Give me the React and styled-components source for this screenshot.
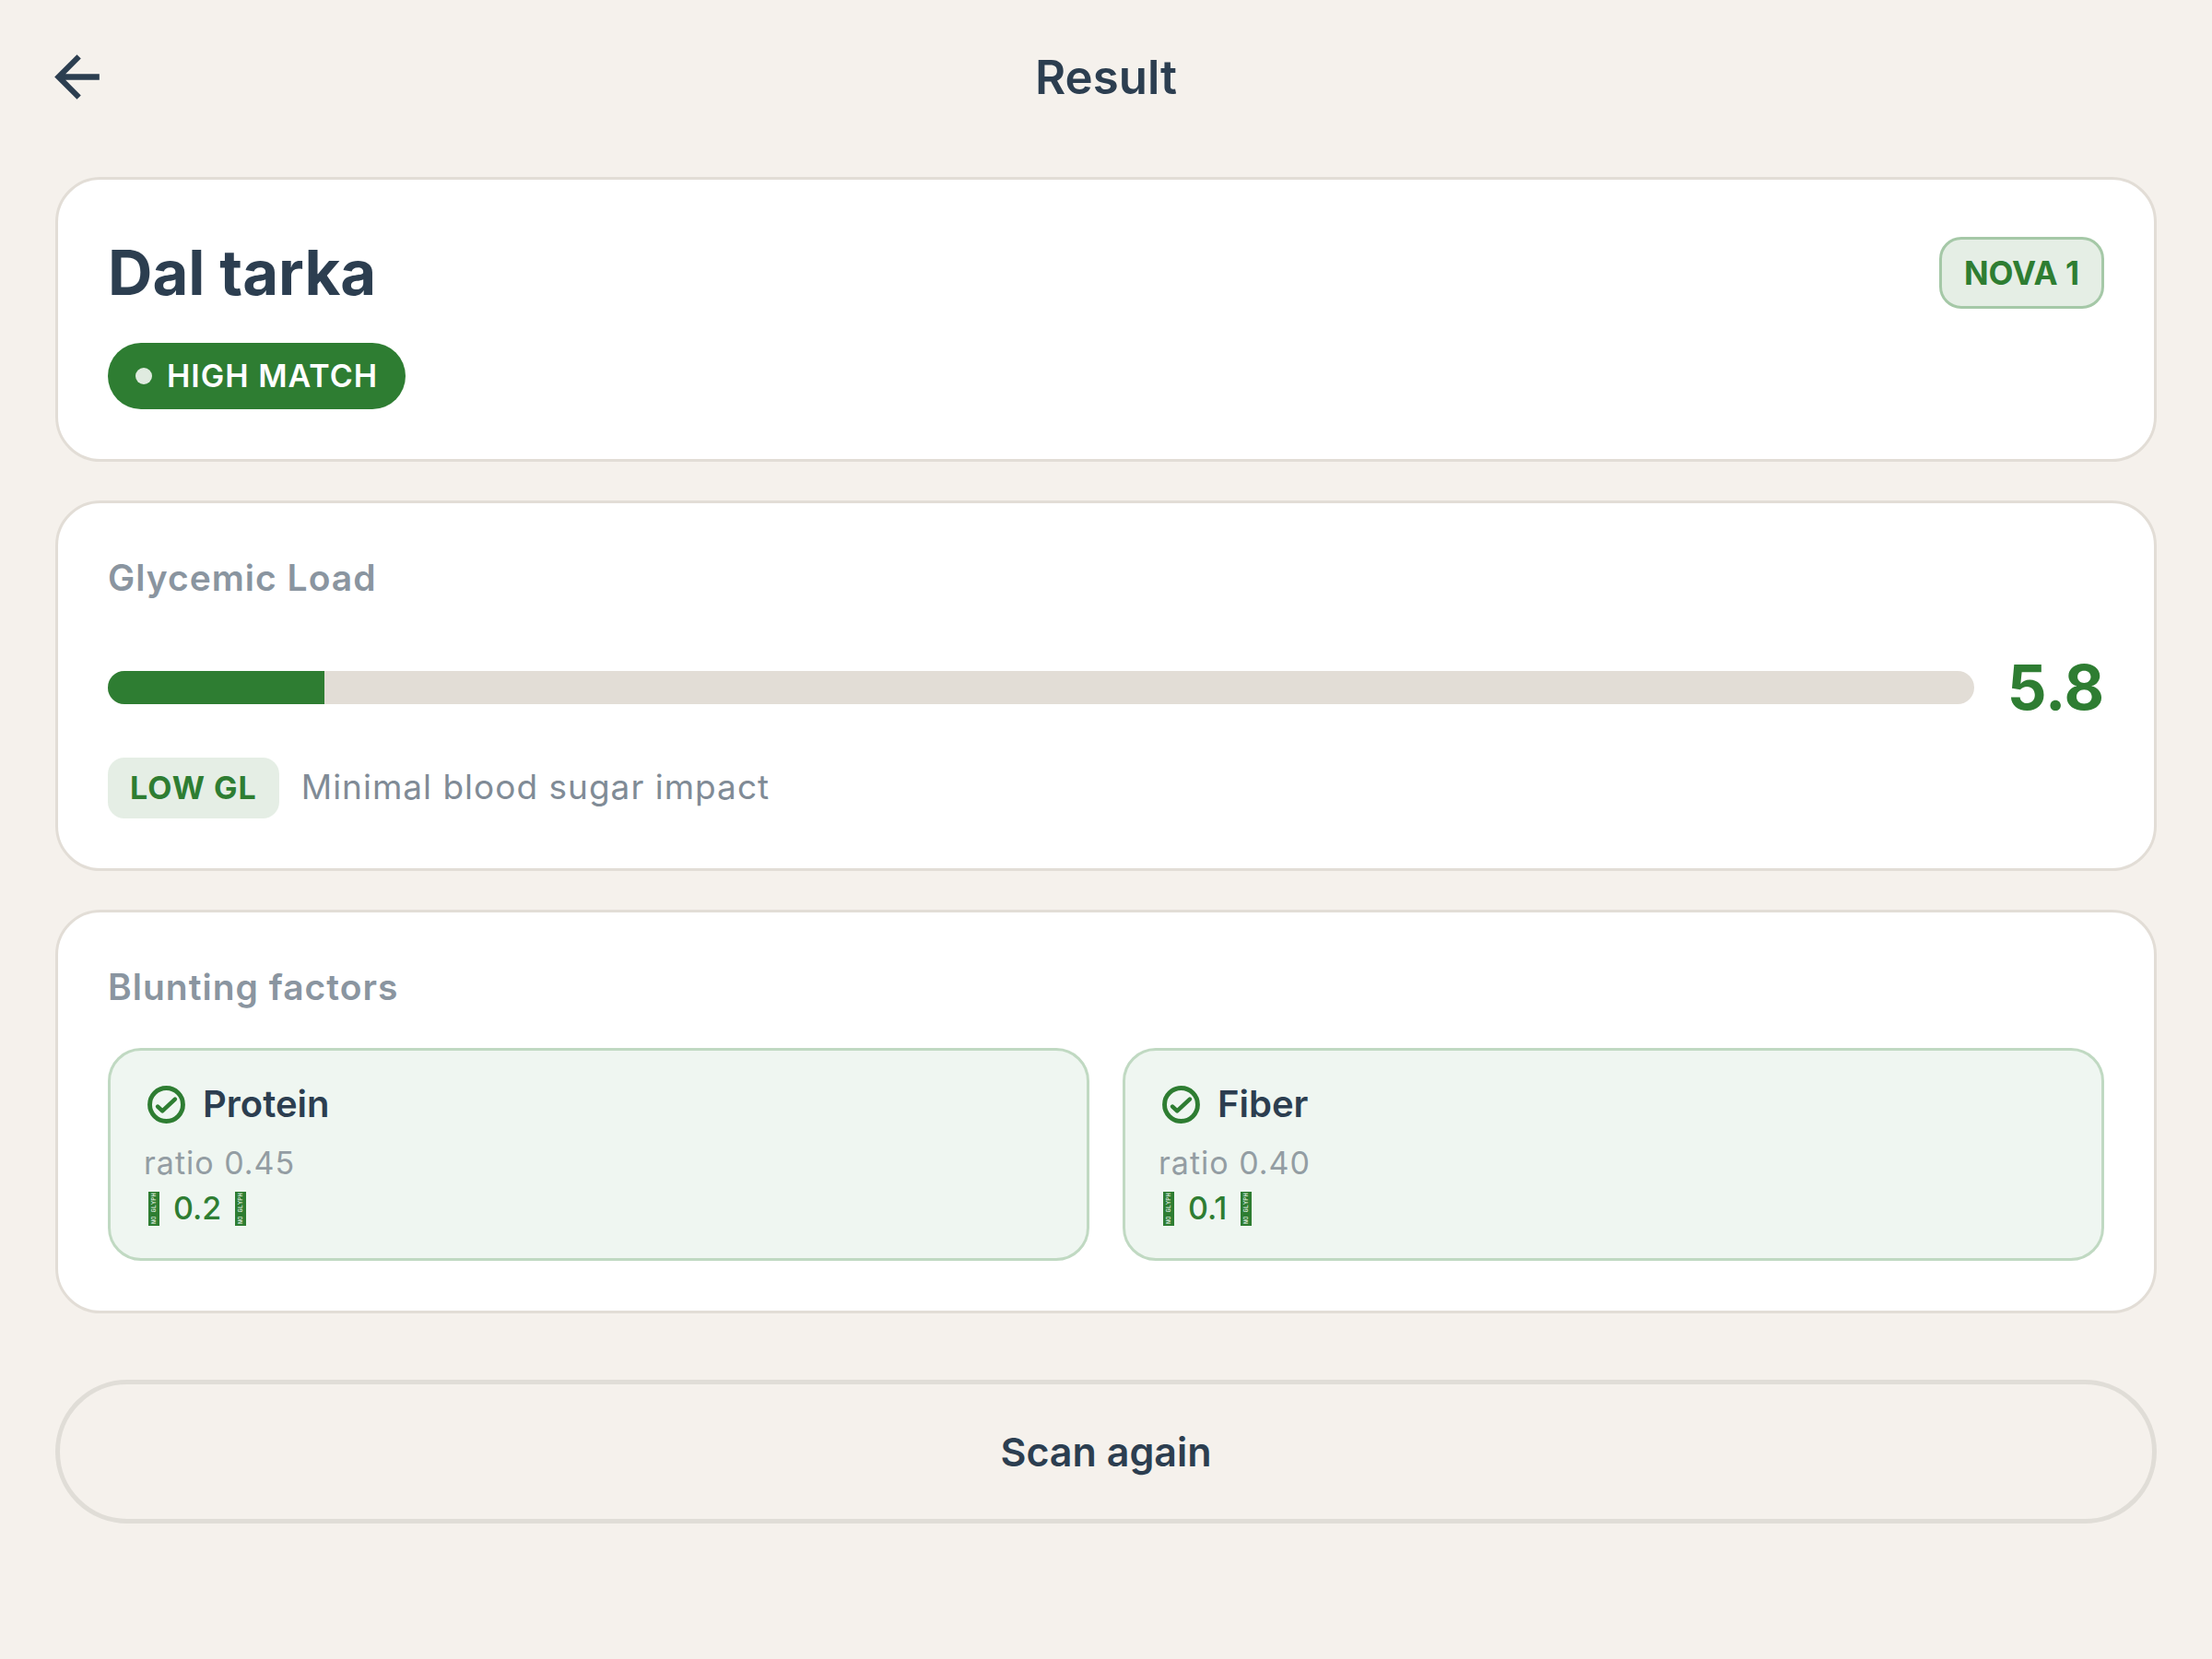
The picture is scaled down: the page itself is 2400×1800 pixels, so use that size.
import React from "react";
import styled, { createGlobalStyle } from "styled-components";

const GlobalStyle = createGlobalStyle`
  * {
    box-sizing: border-box;
  }

  body {
    margin: 0;
    background: #f5f1ec;
    color: #2c3e50;
    font-family: Inter, "Liberation Sans", sans-serif;
  }

  h1, h2, h3, p {
    margin: 0;
  }
`;

const Page = styled.div`
  min-height: 100vh;
  padding-bottom: 60px;
`;

const Header = styled.header`
  display: grid;
  grid-template-columns: 1fr auto 1fr;
  align-items: center;
  padding: 47px 47px 72px;
`;

const BackButton = styled.button`
  display: flex;
  justify-self: start;
  padding: 0;
  border: none;
  background: none;
  color: inherit;
  cursor: pointer;
`;

const HeaderTitle = styled.h1`
  font-size: 51px;
  line-height: 72px;
  font-weight: 600;
`;

const Content = styled.main`
  display: flex;
  flex-direction: column;
  gap: 42px;
  padding: 0 60px;
`;

const Card = styled.section`
  padding: 54px;
  background: #ffffff;
  border: 3px solid #e2ddd6;
  border-radius: 49px;
`;

const DishRow = styled.div`
  display: flex;
  align-items: center;
  justify-content: space-between;
  margin-bottom: 29px;
`;

const DishName = styled.h2`
  font-size: 67px;
  line-height: 94px;
  font-weight: 700;
`;

const NovaBadge = styled.span`
  padding: 12px 24px;
  background: #e5eee5;
  border: 3px solid #a5c8a7;
  border-radius: 24px;
  color: #2e7d32;
  font-size: 35px;
  line-height: 48px;
  font-weight: 700;
`;

const MatchPill = styled.span`
  display: inline-flex;
  align-items: center;
  gap: 16px;
  height: 72px;
  padding: 0 30px;
  background: #2e7d32;
  border-radius: 36px;
  color: #ffffff;
  font-size: 34px;
  line-height: 48px;
  font-weight: 600;
  letter-spacing: 1px;
  vertical-align: top;
`;

const Dot = styled.span`
  width: 18px;
  height: 18px;
  border-radius: 50%;
  background: #e0ebe0;
`;

const CardTitle = styled.h3`
  margin-bottom: ${(props) => props.$gap}px;
  color: #8a95a0;
  font-size: 39px;
  line-height: 54px;
  font-weight: 600;
  letter-spacing: 1px;
`;

const GaugeRow = styled.div`
  display: flex;
  align-items: center;
  gap: 36px;
  margin-bottom: 30px;
`;

const Track = styled.div`
  flex: 1;
  height: 36px;
  background: #e2ddd6;
  border-radius: 18px;
  overflow: hidden;
`;

const Fill = styled.div`
  height: 100%;
  background: #2e7d32;
`;

const GaugeValue = styled.span`
  color: #2e7d32;
  font-size: 67px;
  line-height: 92px;
  font-weight: 700;
`;

const ImpactRow = styled.div`
  display: flex;
  align-items: baseline;
  gap: 24px;
`;

const LevelTag = styled.span`
  padding: 9px 24px;
  background: #e5eee5;
  border-radius: 18px;
  color: #2e7d32;
  font-size: 34px;
  line-height: 48px;
  font-weight: 700;
  letter-spacing: 1px;
`;

const ImpactText = styled.p`
  color: #808b96;
  font-size: 37px;
  line-height: 48px;
  letter-spacing: 1px;
`;

const FactorGrid = styled.div`
  display: grid;
  grid-template-columns: 1fr 1fr;
  gap: 36px;
`;

const Factor = styled.div`
  padding: 31px 36px 29px;
  background: #eff6f1;
  border: 3px solid #c0d9c2;
  border-radius: 36px;
`;

const FactorHead = styled.div`
  display: flex;
  align-items: center;
  gap: 15px;
  margin-bottom: 13px;
`;

const FactorName = styled.span`
  font-size: 40px;
  line-height: 54px;
  font-weight: 600;
`;

const FactorRatio = styled.p`
  color: #939da3;
  font-size: 34px;
  line-height: 48px;
  letter-spacing: 1px;
`;

const FactorEffect = styled.p`
  display: flex;
  align-items: center;
  gap: 15px;
  padding-left: 5px;
  color: #2e7d32;
  font-size: 34px;
  line-height: 50px;
  font-weight: 500;
`;

// narrow missing-glyph box, lettered bottom to top
const GlyphBox = styled.span`
  display: flex;
  align-items: center;
  justify-content: center;
  width: 12px;
  height: 37px;
  background: #2e7d32;
  color: #eff6f1;
  font-family: "Liberation Mono", monospace;
  font-size: 7px;
  line-height: 12px;
  font-weight: 400;
  white-space: nowrap;
  writing-mode: vertical-rl;
  transform: rotate(180deg);
`;

const ScanButton = styled.button`
  height: 156px;
  margin-top: 30px;
  background: transparent;
  border: 5px solid #e0ddd7;
  border-radius: 78px;
  color: inherit;
  font-family: inherit;
  font-size: 43px;
  font-weight: 600;
  cursor: pointer;
`;

const factors = [
  { name: "Protein", ratio: "0.45", effect: "0.2" },
  { name: "Fiber", ratio: "0.40", effect: "0.1" },
];

const MAX_LOAD = 50;
const load = 5.8;

const BackIcon = () => (
  <svg width="73" height="73" viewBox="0 0 24 24" fill="currentColor" aria-hidden="true">
    <path d="M20 10.9H7.93l5.48-5.49L12 4l-8 8 8 8 1.41-1.41-5.48-5.49H20z" />
  </svg>
);

const CheckIcon = () => (
  <svg width="49" height="49" viewBox="0 0 24 24" fill="none" stroke="#2e7d32" aria-hidden="true">
    <circle cx="12" cy="12" r="8.8" strokeWidth="2.4" />
    <path d="M7.4 13l2.5 2.4 6.7-6.3" strokeWidth="2.2" strokeLinecap="round" strokeLinejoin="round" />
  </svg>
);

const App = () => {
  return (
    <>
      <GlobalStyle />
      <Page>
        <Header>
          <BackButton type="button" aria-label="Back">
            <BackIcon />
          </BackButton>
          <HeaderTitle>Result</HeaderTitle>
        </Header>

        <Content>
          <Card>
            <DishRow>
              <DishName>Dal tarka</DishName>
              <NovaBadge>NOVA 1</NovaBadge>
            </DishRow>
            <MatchPill>
              <Dot />
              HIGH MATCH
            </MatchPill>
          </Card>

          <Card>
            <CardTitle $gap={46}>Glycemic Load</CardTitle>
            <GaugeRow>
              <Track>
                <Fill style={{ width: `${(load / MAX_LOAD) * 100}%` }} />
              </Track>
              <GaugeValue>{load}</GaugeValue>
            </GaugeRow>
            <ImpactRow>
              <LevelTag>LOW GL</LevelTag>
              <ImpactText>Minimal blood sugar impact</ImpactText>
            </ImpactRow>
          </Card>

          <Card>
            <CardTitle $gap={39}>Blunting factors</CardTitle>
            <FactorGrid>
              {factors.map((factor) => (
                <Factor key={factor.name}>
                  <FactorHead>
                    <CheckIcon />
                    <FactorName>{factor.name}</FactorName>
                  </FactorHead>
                  <FactorRatio>ratio {factor.ratio}</FactorRatio>
                  <FactorEffect>
                    <GlyphBox>NO GLYPH</GlyphBox>
                    {factor.effect}
                    <GlyphBox>NO GLYPH</GlyphBox>
                  </FactorEffect>
                </Factor>
              ))}
            </FactorGrid>
          </Card>

          <ScanButton type="button">Scan again</ScanButton>
        </Content>
      </Page>
    </>
  );
};

export default App;
